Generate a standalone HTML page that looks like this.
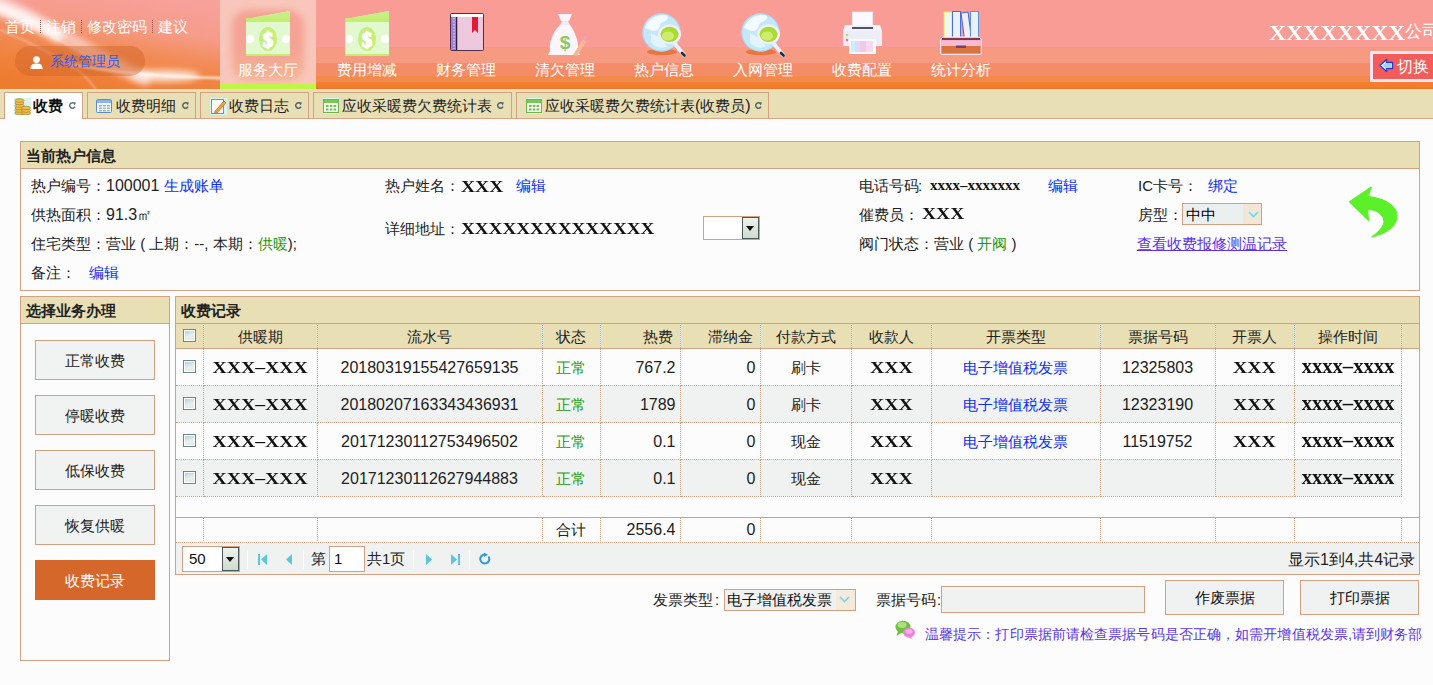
<!DOCTYPE html>
<html><head><meta charset="utf-8">
<style>
*{margin:0;padding:0;box-sizing:border-box}
html,body{width:1433px;height:685px;overflow:hidden;background:#fcfcfc;font-family:"Liberation Sans",sans-serif;font-size:15px;color:#333}
.abs{position:absolute}
#hdr{position:absolute;left:0;top:0;width:1433px;height:90px;
 background:linear-gradient(to bottom,#f99c95 0,#f99c95 47px,#f79a82 47px,#f79a82 63px,#f48c68 63px,#f48c68 76px,#f38a4c 76px,#f38a4c 82px,#f28232 82px,#f07a28 88px,#ee7020 89px,#f8d2ec 89px)}
#swirl{position:absolute;left:0;top:0;width:220px;height:89px;
 background:linear-gradient(160deg,#f6a59a 0%,#f49b82 30%,#f28a50 60%,#ee7d30 100%)}
.toplinks{position:absolute;left:5px;top:18px;color:#fff;font-size:15px;white-space:nowrap}
.toplinks i{display:inline-block;width:0;height:13px;border-left:1px dotted #8a5a50;margin:0 5px;vertical-align:-1px}
.pill{position:absolute;left:15px;top:46px;width:130px;height:30px;border-radius:15px;background:rgba(205,95,35,.42)}
.nav{position:absolute;top:0;width:96px;height:89px;text-align:center;color:#fff;font-size:14px}
.nav .t{position:absolute;left:0;right:0;top:61px}
.nav svg{position:absolute;left:24px;top:8px}
.nav.on{background:#f8c6ba}
.nav.on:before{content:"";position:absolute;left:12px;right:12px;top:10px;bottom:8px;border-radius:16px;background:linear-gradient(to bottom,#f4a294,#f4a494 55%,#f5b494);filter:blur(3px)}
.nav.on:after{content:"";position:absolute;left:0;right:0;top:84px;height:5px;background:#c0f548}
#company{position:absolute;left:1269px;top:21px;color:#fff;font-family:"Liberation Serif",serif;font-weight:bold;font-size:21px;white-space:nowrap}
#switch{position:absolute;left:1370px;top:51px;width:63px;height:31px;background:#f25c5a;border:3px solid #fae4f4;border-right:none;color:#fff;font-size:15px}
#tabbar{position:absolute;left:0;top:90px;width:1433px;height:29px;background:#e8e0b4;border-bottom:1px solid #d6a585}
.tab{position:absolute;top:92px;height:26px;border:1px solid #d2a181;border-bottom:none;background:#e8dfb5}
.tab.on{background:#fff;height:27px}
.panel{position:absolute;border:1px solid #d2a181;background:#fcfcfc}
.ph{white-space:nowrap;overflow:hidden;position:absolute;left:0;right:0;top:0;height:27px;background:#e8dfb5;border-bottom:1px solid #d2a181;font-weight:bold;font-size:15px;color:#222;padding:5px 0 0 5px}
.lbl{position:absolute;white-space:nowrap;font-size:15px;color:#222}
.blue{color:#0a2ef8}
.green{color:#1e9a0c}
.ser{font-family:"Liberation Serif",serif;font-weight:bold;color:#111}
.sx{transform:scaleX(1.22);transform-origin:left}
.btn{white-space:nowrap;overflow:hidden;position:absolute;left:35px;width:120px;height:40px;border:1px solid #d2a181;background:#f1f2f2;text-align:center;line-height:40px;font-size:15px;color:#222}
.btn.on{background:#d6672b;border-color:#d6672b;color:#fff}

#grid td,#foot td{border:1px dotted #d2a181;text-align:center;font-size:15px;color:#222;height:37px;white-space:nowrap;overflow:hidden;padding:2px 4px 0 4px}
#grid tr.hd td{height:25px;border-bottom:1px solid #d2a181;background:#e8dfb5;padding-top:2px}
#grid tr.hd td.r{padding-right:7px}
#grid tr.alt td{background:#f0f2f2}
#grid td:first-child,#foot td:first-child{border-left:none}
#foot td{height:25px;border-top:none}
#grid td.r,#foot td.r{text-align:right}
#grid td.green{color:#1e9a0c}
#grid td.blue{color:#0a2ef8}
#grid td.e,#foot td.e{border-right:none}
#grid td.n{border:none;background:transparent!important}
#grid td.x{font-family:"Liberation Serif",serif;font-weight:bold;font-size:17px;color:#111}
#grid td.x span{display:inline-block;transform:scaleX(1.16)}
#grid td.d,#foot td.d{font-size:16px}
#grid td.x2{font-family:"Liberation Serif",serif;font-weight:bold;font-size:20px;color:#111}
#grid td.x2 span{display:inline-block;transform:scaleX(1.03);position:relative;top:-2px}
.cb{display:inline-block;width:13px;height:13px;border:1.5px solid #6f858c;box-shadow:inset 0 0 0 1px #fff;background:linear-gradient(160deg,#a8cce0,#e8f0ee 55%,#d8eed8);vertical-align:middle;position:relative;top:-3px}
.sep{top:550px;width:1px;height:19px;background:#d8dcdc;border-right:1px solid #fff}
.btn2{white-space:nowrap;overflow:hidden;border:1px solid #d2a181;background:#f0f2f2;text-align:center;line-height:33px;font-size:15px;color:#111}
.navt{color:#fff;font-size:15px}
.dg{font-size:16px}
</style></head><body>
<div id="hdr"></div>
<svg id="swirl" width="220" height="89" viewBox="0 0 220 89" style="position:absolute;left:0;top:0">
<defs>
<linearGradient id="sg" x1="0.75" y1="0" x2="0.35" y2="1"><stop offset="0" stop-color="#f8a09a"/><stop offset="0.3" stop-color="#f69c8a"/><stop offset="0.55" stop-color="#f28c58"/><stop offset="0.75" stop-color="#f08440"/><stop offset="1" stop-color="#ee7c30"/></linearGradient>
<filter id="bl" x="-30%" y="-80%" width="160%" height="260%"><feGaussianBlur stdDeviation="3"/></filter>
<filter id="bl2" x="-20%" y="-50%" width="140%" height="200%"><feGaussianBlur stdDeviation="0.8"/></filter>
</defs>
<rect width="220" height="89" fill="url(#sg)"/>
<path d="M-10 -2 C15 8 45 25 85 48 C105 60 125 72 150 80" stroke="#fde8f0" stroke-width="14" fill="none" opacity=".6" filter="url(#bl)"/>
<path d="M-8 6 C15 14 38 24 62 38" stroke="#fff" stroke-width="12" fill="none" opacity=".85" filter="url(#bl)"/>
<path d="M0 30 C30 42 60 58 80 72 C88 78 92 84 96 90" stroke="#f8c8c0" stroke-width="1.5" fill="none" opacity=".7" filter="url(#bl2)"/>
<path d="M20 22 C50 34 80 50 105 68" stroke="#fff0f4" stroke-width="1.2" fill="none" opacity=".6" filter="url(#bl2)"/>
<ellipse cx="165" cy="76" rx="35" ry="6" fill="#fff" opacity=".75" filter="url(#bl)"/>
<path d="M70 64 C110 72 160 77 222 78" stroke="#fff" stroke-width="1.8" fill="none" opacity=".9" filter="url(#bl2)"/>
</svg>
<div class="toplinks">首页<i></i>注销<i></i>修改密码<i></i>建议</div>
<div class="pill"></div>
<div class="lbl" style="left:50px;top:53px;color:#2a5af8;font-size:14px">系统管理员</div>
<svg class="abs" style="left:30px;top:56px" width="13" height="13" viewBox="0 0 13 13"><circle cx="6.5" cy="3.6" r="3.4" fill="#fff"/><path d="M0.5 13 C0.5 8.5 3 7.5 6.5 7.5 C10 7.5 12.5 8.5 12.5 13Z" fill="#fff"/></svg>

<div class="nav on" style="left:220px;width:96px"></div>
<div class="lbl navt" style="left:268.0px;top:61px;width:90px;margin-left:-45px;text-align:center">服务大厅</div>
<div class="lbl navt" style="left:367.0px;top:61px;width:90px;margin-left:-45px;text-align:center">费用增减</div>
<div class="lbl navt" style="left:465.9px;top:61px;width:90px;margin-left:-45px;text-align:center">财务管理</div>
<div class="lbl navt" style="left:564.9px;top:61px;width:90px;margin-left:-45px;text-align:center">清欠管理</div>
<div class="lbl navt" style="left:663.9px;top:61px;width:90px;margin-left:-45px;text-align:center">热户信息</div>
<div class="lbl navt" style="left:762.9px;top:61px;width:90px;margin-left:-45px;text-align:center">入网管理</div>
<div class="lbl navt" style="left:861.8px;top:61px;width:90px;margin-left:-45px;text-align:center">收费配置</div>
<div class="lbl navt" style="left:960.8px;top:61px;width:90px;margin-left:-45px;text-align:center">统计分析</div>
<svg class="abs" style="left:245px;top:10px" width="47" height="47" viewBox="0 0 47 47">
<path d="M1 9 L45 1 L45 46 L1 46Z" fill="#d6f5a8"/>
<path d="M1 9 L45 1 L45 8 L1 8Z" fill="#c8ee88"/>
<rect x="1" y="8" width="44" height="4" fill="#c4ee70"/>
<rect x="1" y="12" width="44" height="33" fill="#e2f9cf"/>
<rect x="1" y="44" width="44" height="2" fill="#c4ee70"/>
<ellipse cx="23" cy="29" rx="9" ry="12" fill="#c6ee78"/>
<text x="23" y="36.5" text-anchor="middle" font-family="Liberation Serif" font-weight="bold" font-size="21" fill="#ffffff" stroke="#ffffff" stroke-width="1.3">$</text>
<circle cx="5" cy="29" r="4" fill="#fff"/><circle cx="41" cy="29" r="4" fill="#fff"/>
</svg><svg class="abs" style="left:344px;top:10px" width="47" height="47" viewBox="0 0 47 47">
<path d="M1 9 L45 1 L45 46 L1 46Z" fill="#d6f5a8"/>
<path d="M1 9 L45 1 L45 8 L1 8Z" fill="#c8ee88"/>
<rect x="1" y="8" width="44" height="4" fill="#c4ee70"/>
<rect x="1" y="12" width="44" height="33" fill="#e2f9cf"/>
<rect x="1" y="44" width="44" height="2" fill="#c4ee70"/>
<ellipse cx="23" cy="29" rx="9" ry="12" fill="#c6ee78"/>
<text x="23" y="36.5" text-anchor="middle" font-family="Liberation Serif" font-weight="bold" font-size="21" fill="#ffffff" stroke="#ffffff" stroke-width="1.3">$</text>
<circle cx="5" cy="29" r="4" fill="#fff"/><circle cx="41" cy="29" r="4" fill="#fff"/>
</svg><svg class="abs" style="left:450px;top:13px" width="34" height="38" viewBox="0 0 34 38">
<rect x="0.5" y="0.5" width="33" height="37" rx="1" fill="#ecc0d8" stroke="#503050" stroke-width="1"/>
<rect x="1" y="1" width="32" height="3" fill="#fff"/>
<rect x="1" y="4" width="5" height="33" fill="#a080d0"/>
<rect x="6" y="4" width="1.5" height="33" fill="#302040"/>
<line x1="4" y1="5" x2="4" y2="36" stroke="#fff" stroke-width="0.8" stroke-dasharray="1.5,1.5"/>
<rect x="7.5" y="4" width="25" height="33" fill="#eec8dc"/>

<path d="M22 4 L28 4 L28 20 L25 17 L22 20Z" fill="#e01a38"/>
</svg><svg class="abs" style="left:548px;top:13px" width="38" height="44" viewBox="0 0 38 44">
<path d="M10 1 L24 1 L21 8 L13 8Z" fill="#fbf4fb"/>
<path d="M14 8 L20 8 L22 12 L12 12Z" fill="#f2e8f2"/>
<path d="M12 12 C4 20 1 30 2 38 L0 42 L32 42 L30 38 C31 30 28 20 22 12Z" fill="#fbf6fb"/>
<text x="17" y="36" text-anchor="middle" font-family="Liberation Sans" font-weight="bold" font-size="19" fill="#86c870">$</text>
<path d="M25 42 L35 26 L38.5 28.5 L29 43Z" fill="#f6b890"/>
<path d="M35 26 L36.5 23 L39.5 25 L38.5 28.5Z" fill="#f0a0d8"/>
</svg><svg class="abs" style="left:641px;top:12px" width="46" height="45" viewBox="0 0 46 45">
<ellipse cx="21" cy="40" rx="15" ry="3.2" fill="#e26a2a" opacity=".75"/>
<circle cx="20.5" cy="20.5" r="19" fill="#c4e8f8"/>
<circle cx="20.5" cy="20.5" r="18.6" fill="none" stroke="#a8d8f4" stroke-width="1"/>
<path d="M4 16 C8 7 16 2 24 3 C30 4 26 9 22 10 C18 11 20 15 16 18 C12 21 8 17 4 16Z" fill="#f4fcff" opacity=".95"/>
<path d="M10 22 C16 22 20 28 26 34 C22 37 14 36 10 30Z" fill="#eaf8ff" opacity=".8"/>
<path d="M34 32 L43 43" stroke="#eeeeff" stroke-width="4" stroke-linecap="round"/>
<path d="M41 41 L43.5 43.5" stroke="#203040" stroke-width="2.6" stroke-linecap="round"/>
<ellipse cx="28.5" cy="22.3" rx="11.5" ry="10" fill="#f2eefc"/>
<ellipse cx="28.5" cy="22.3" rx="9" ry="7.6" fill="#a8dc30"/>
<ellipse cx="27" cy="24" rx="6" ry="4.5" fill="#d8f080" opacity=".8"/>
</svg><svg class="abs" style="left:740px;top:12px" width="46" height="45" viewBox="0 0 46 45">
<ellipse cx="21" cy="40" rx="15" ry="3.2" fill="#e26a2a" opacity=".75"/>
<circle cx="20.5" cy="20.5" r="19" fill="#c4e8f8"/>
<circle cx="20.5" cy="20.5" r="18.6" fill="none" stroke="#a8d8f4" stroke-width="1"/>
<path d="M4 16 C8 7 16 2 24 3 C30 4 26 9 22 10 C18 11 20 15 16 18 C12 21 8 17 4 16Z" fill="#f4fcff" opacity=".95"/>
<path d="M10 22 C16 22 20 28 26 34 C22 37 14 36 10 30Z" fill="#eaf8ff" opacity=".8"/>
<path d="M34 32 L43 43" stroke="#eeeeff" stroke-width="4" stroke-linecap="round"/>
<path d="M41 41 L43.5 43.5" stroke="#203040" stroke-width="2.6" stroke-linecap="round"/>
<ellipse cx="28.5" cy="22.3" rx="11.5" ry="10" fill="#f2eefc"/>
<ellipse cx="28.5" cy="22.3" rx="9" ry="7.6" fill="#a8dc30"/>
<ellipse cx="27" cy="24" rx="6" ry="4.5" fill="#d8f080" opacity=".8"/>
</svg><svg class="abs" style="left:842px;top:11px" width="41" height="44" viewBox="0 0 41 44">
<rect x="10" y="0.5" width="21" height="17" fill="#fafafe" stroke="#c0c0e0" stroke-width="0.8"/>
<path d="M3 14 L38 14 L40 20 L40 35 L1 35 L1 20Z" fill="#f2f2fa"/>
<rect x="1" y="20" width="39" height="15" fill="#ecedf6"/>
<rect x="10" y="16" width="21" height="2" fill="#505070"/>
<circle cx="5" cy="24" r="1.2" fill="#a0e070"/><circle cx="5" cy="29" r="1.2" fill="#ff6080"/>
<rect x="7" y="28" width="27" height="15" fill="#f8f8ff"/>
<rect x="9" y="30" width="4" height="11" fill="#c8f0f8"/><rect x="13" y="30" width="5" height="11" fill="#e0d8f8"/><rect x="18" y="30" width="6" height="11" fill="#f0c8e8"/><rect x="24" y="30" width="7" height="11" fill="#f8d8f0"/>
</svg><svg class="abs" style="left:939px;top:11px" width="44" height="44" viewBox="0 0 44 44">
<rect x="5" y="1" width="8" height="31" fill="#f2f6ee" stroke="#d8f040" stroke-width="1"/>
<rect x="13.5" y="0.5" width="8" height="32" fill="#eaf2fc" stroke="#4a70e0" stroke-width="1"/>
<path d="M22 2 L29 1 L33 31 L26 32Z" fill="#f0eefc" stroke="#5060d0" stroke-width="1"/>
<rect x="31.5" y="0.5" width="8" height="32" fill="#e6f2fc" stroke="#6090e0" stroke-width="1"/>
<circle cx="9" cy="28" r="1.3" fill="#a0a0b0"/><circle cx="17.5" cy="28" r="1.3" fill="#a0a0c0"/><circle cx="28" cy="28" r="1.3" fill="#9090b0"/><circle cx="35.5" cy="28" r="1.3" fill="#a0a0c0"/>
<path d="M1.5 28 L4 26 L40 26 L42.5 28 L42.5 42 Q42.5 43.5 41 43.5 L3 43.5 Q1.5 43.5 1.5 42Z" fill="#f4b0c8" stroke="#f8e0f0" stroke-width="1"/>
<rect x="3" y="27" width="38" height="2" fill="#803848"/>
<rect x="2.5" y="30" width="39" height="5" fill="#f4bcd4"/>
<rect x="2.5" y="35" width="39" height="7.5" fill="#d8743c"/>
<rect x="17" y="34.5" width="10" height="2.5" fill="#704070"/>
</svg>
<div id="company"><span style="display:inline-block;transform:scaleX(1.124);transform-origin:left;margin-right:15px">XXXXXXXX</span><span style="font-family:'Liberation Sans',sans-serif;font-weight:normal;font-size:17px;position:relative;top:-3px">公司</span></div>
<div id="switch"></div>
<svg class="abs" style="left:1379px;top:58px" width="15" height="15" viewBox="0 0 15 15"><path d="M1 7.5 L7.5 1.5 L7.5 4.5 L13.5 4.5 L13.5 10.5 L7.5 10.5 L7.5 13.5Z" fill="#e8f4ff" stroke="#2a3ad0" stroke-width="1.3" stroke-linejoin="round"/><path d="M3.5 7.5 L7 4.5 L7 6 L12 6 L12 9 L7 9 L7 10.5Z" fill="#9cd0ff"/></svg>
<div class="lbl" style="left:1397px;top:57px;color:#fff;font-size:16px">切换</div>

<div id="tabbar"></div>
<div class="tab on" style="left:4px;width:79px"></div>
<div class="tab" style="left:87px;width:109px"></div>
<div class="tab" style="left:200px;width:109px"></div>
<div class="tab" style="left:313px;width:199px"></div>
<div class="tab" style="left:516px;width:253px"></div>
<svg class="abs" style="left:14px;top:98px" width="17" height="17" viewBox="0 0 17 17"><rect x="0" y="0" width="17" height="17" fill="#d8f4ec"/><g fill="#e8c050" stroke="#b08020" stroke-width="0.7"><ellipse cx="5.5" cy="15" rx="4.5" ry="1.8"/><ellipse cx="5.5" cy="12.5" rx="4.5" ry="1.8"/><ellipse cx="5.5" cy="10" rx="4.5" ry="1.8"/><ellipse cx="5.5" cy="7.5" rx="4.5" ry="1.8"/><ellipse cx="5.5" cy="5" rx="4.5" ry="1.8"/><ellipse cx="5.5" cy="2.5" rx="4.5" ry="1.8"/><ellipse cx="12" cy="15" rx="4.5" ry="1.8"/><ellipse cx="12" cy="12.5" rx="4.5" ry="1.8"/><ellipse cx="12" cy="10" rx="4.5" ry="1.8"/></g></svg>
<svg class="abs" style="left:96px;top:99px" width="16" height="14" viewBox="0 0 16 14"><rect x="0.5" y="0.5" width="15" height="13" rx="1" fill="#f4f8fc" stroke="#5a8ad8"/><rect x="1" y="1" width="14" height="3" fill="#8ab4ec"/><g fill="#9ab0c0"><rect x="3" y="6" width="3" height="1.4"/><rect x="7" y="6" width="3" height="1.4"/><rect x="11" y="6" width="3" height="1.4"/><rect x="3" y="8.5" width="3" height="1.4"/><rect x="7" y="8.5" width="3" height="1.4" fill="#8cd08c"/><rect x="11" y="8.5" width="3" height="1.4"/><rect x="3" y="11" width="3" height="1.4"/><rect x="7" y="11" width="3" height="1.4"/><rect x="11" y="11" width="3" height="1.4"/></g></svg>
<svg class="abs" style="left:210px;top:98px" width="17" height="17" viewBox="0 0 17 17"><rect x="0" y="0" width="17" height="17" fill="#d8f4ec"/><rect x="1.5" y="1.5" width="12" height="14" fill="#fbfbf6" stroke="#8a9098"/><path d="M5 13 L14 3 L16 5 L7 15 L4.5 15.5Z" fill="#f0a040" stroke="#a06020" stroke-width="0.6"/></svg>
<svg class="abs" style="left:323px;top:98px" width="16" height="16" viewBox="0 0 16 16"><rect x="0" y="0" width="16" height="16" fill="#d8f4ec"/><rect x="0.5" y="1.5" width="15" height="13" fill="#f2f8e8" stroke="#6cb84a"/><rect x="1" y="2" width="14" height="3" fill="#78c858"/><g fill="#7ab860"><rect x="3" y="7" width="2.5" height="2"/><rect x="6.8" y="7" width="2.5" height="2"/><rect x="10.6" y="7" width="2.5" height="2"/><rect x="3" y="10.5" width="2.5" height="2"/><rect x="6.8" y="10.5" width="2.5" height="2"/><rect x="10.6" y="10.5" width="2.5" height="2"/></g></svg>
<svg class="abs" style="left:526px;top:98px" width="16" height="16" viewBox="0 0 16 16"><rect x="0" y="0" width="16" height="16" fill="#d8f4ec"/><rect x="0.5" y="1.5" width="15" height="13" fill="#f2f8e8" stroke="#6cb84a"/><rect x="1" y="2" width="14" height="3" fill="#78c858"/><g fill="#7ab860"><rect x="3" y="7" width="2.5" height="2"/><rect x="6.8" y="7" width="2.5" height="2"/><rect x="10.6" y="7" width="2.5" height="2"/><rect x="3" y="10.5" width="2.5" height="2"/><rect x="6.8" y="10.5" width="2.5" height="2"/><rect x="10.6" y="10.5" width="2.5" height="2"/></g></svg>
<div class="lbl" style="left:33px;top:97px;font-weight:bold;color:#111">收费</div>
<div class="lbl" style="left:116px;top:97px;color:#222">收费明细</div>
<div class="lbl" style="left:229px;top:97px;color:#222">收费日志</div>
<div class="lbl" style="left:342px;top:97px;color:#222">应收采暖费欠费统计表</div>
<div class="lbl" style="left:545px;top:97px;color:#222">应收采暖费欠费统计表<span style="font-size:16px">(</span>收费员<span style="font-size:16px">)</span></div>
<svg class="abs" style="left:69px;top:102px" width="7" height="7" viewBox="0 0 7 7"><path d="M5.9 4.6 A2.7 2.7 0 1 1 4.8 1.2" fill="none" stroke="#667777" stroke-width="1.5"/><path d="M3.6 0 L7 0.4 L5.6 3.4Z" fill="#667777"/></svg>
<svg class="abs" style="left:182px;top:102px" width="7" height="7" viewBox="0 0 7 7"><path d="M5.9 4.6 A2.7 2.7 0 1 1 4.8 1.2" fill="none" stroke="#556666" stroke-width="1.5"/><path d="M3.6 0 L7 0.4 L5.6 3.4Z" fill="#556666"/></svg>
<svg class="abs" style="left:295px;top:102px" width="7" height="7" viewBox="0 0 7 7"><path d="M5.9 4.6 A2.7 2.7 0 1 1 4.8 1.2" fill="none" stroke="#556666" stroke-width="1.5"/><path d="M3.6 0 L7 0.4 L5.6 3.4Z" fill="#556666"/></svg>
<svg class="abs" style="left:497px;top:102px" width="7" height="7" viewBox="0 0 7 7"><path d="M5.9 4.6 A2.7 2.7 0 1 1 4.8 1.2" fill="none" stroke="#556666" stroke-width="1.5"/><path d="M3.6 0 L7 0.4 L5.6 3.4Z" fill="#556666"/></svg>
<svg class="abs" style="left:755px;top:102px" width="7" height="7" viewBox="0 0 7 7"><path d="M5.9 4.6 A2.7 2.7 0 1 1 4.8 1.2" fill="none" stroke="#556666" stroke-width="1.5"/><path d="M3.6 0 L7 0.4 L5.6 3.4Z" fill="#556666"/></svg>

<!-- info panel -->
<div class="panel" style="left:20px;top:141px;width:1400px;height:150px"><div class="ph">当前热户信息</div></div>
<div class="lbl" style="left:31px;top:177px">热户编号：<span class="dg">100001</span> <span class="blue">生成账单</span></div>
<div class="lbl" style="left:31px;top:206px">供热面积：<span class="dg">91.3</span>㎡</div>
<div class="lbl" style="left:31px;top:235px">住宅类型：营业 ( 上期：--, 本期：<span class="green">供暖</span>);</div>
<div class="lbl" style="left:31px;top:264px">备注： &nbsp; <span class="blue">编辑</span></div>

<div class="lbl" style="left:385px;top:177px">热户姓名：</div>
<div class="lbl ser sx" style="left:461px;top:178px;font-size:16px">XXX</div>
<div class="lbl blue" style="left:516px;top:177px">编辑</div>
<div class="lbl" style="left:385px;top:220px">详细地址：</div>
<div class="lbl ser sx" style="left:461px;top:220px;font-size:16px;transform:scaleX(1.195)">XXXXXXXXXXXXXX</div>
<div class="abs" style="left:703px;top:216px;width:57px;height:24px;border:1px solid #d2a181;background:#fff"></div>
<div class="abs" style="left:742px;top:217px;width:17px;height:22px;border:1px solid #4a5a58;background:linear-gradient(#eef2ee,#cfdccf)"></div>
<div class="abs" style="left:746px;top:226px;width:0;height:0;border-left:4px solid transparent;border-right:4px solid transparent;border-top:5px solid #111"></div>

<div class="lbl" style="left:859px;top:177px">电话号码<span style="margin-left:-1px">:</span></div>
<div class="lbl ser" style="left:930px;top:177px;font-size:15px">xxxx–xxxxxxx</div>
<div class="lbl blue" style="left:1048px;top:177px">编辑</div>
<div class="lbl" style="left:859px;top:206px">催费员：</div>
<div class="lbl ser sx" style="left:922px;top:205px;font-size:16px">XXX</div>
<div class="lbl" style="left:859px;top:235px">阀门状态：营业 ( <span class="green">开阀</span> )</div>
<div class="lbl" style="left:1138px;top:177px">IC卡号：</div>
<div class="lbl blue" style="left:1208px;top:177px">绑定</div>
<div class="lbl" style="left:1138px;top:206px">房型：</div>
<div class="abs" style="left:1182px;top:203px;width:80px;height:22px;border:1px solid #d2a181;background:#f3e6d6"></div>
<div class="abs" style="left:1183px;top:204px;width:60px;height:20px;background:#eceff0"></div>
<div class="lbl" style="left:1186px;top:206px;color:#000">中中</div>
<svg class="abs" style="left:1248px;top:211px" width="11" height="7" viewBox="0 0 11 7"><path d="M1 1 L5.5 5.5 L10 1" fill="none" stroke="#5ee0f0" stroke-width="1.6"/></svg>
<div class="lbl" style="left:1137px;top:235px;color:#5a30ee;text-decoration:underline">查看收费报修测温记录</div>
<svg class="abs" style="left:1346px;top:185px" width="54" height="54" viewBox="0 0 54 54"><path d="M3.5 16.8 L25.3 2.1 L22 11.6 C38 13 51 21 51 31 C51 41 40 49 25.8 52 C36 45 40 38 37 32 C34 27 28 24.4 21.5 24.4 L22.5 35.3 Z" fill="#5cf02a" stroke="#5cf02a" stroke-width="1.2" stroke-linejoin="round"/></svg>

<!-- left panel -->
<div class="panel" style="left:20px;top:296px;width:150px;height:365px"><div class="ph">选择业务办理</div></div>
<div class="btn" style="top:340px">正常收费</div>
<div class="btn" style="top:395px">停暖收费</div>
<div class="btn" style="top:450px">低保收费</div>
<div class="btn" style="top:505px">恢复供暖</div>
<div class="btn on" style="top:560px">收费记录</div>

<!-- records panel -->
<div class="panel" style="left:175px;top:296px;width:1245px;height:279px"><div class="ph">收费记录</div></div>

<!-- table -->
<table id="grid" style="position:absolute;left:176px;top:323px;border-collapse:collapse;table-layout:fixed;width:1243px">
<colgroup><col style="width:27px"><col style="width:114px"><col style="width:225px"><col style="width:58px"><col style="width:80px"><col style="width:80px"><col style="width:91px"><col style="width:80px"><col style="width:169px"><col style="width:115px"><col style="width:79px"><col style="width:107px"><col style="width:18px"></colgroup>
<tr class="hd"><td><b class="cb"></b></td><td>供暖期</td><td>流水号</td><td>状态</td><td class="r">热费</td><td class="r">滞纳金</td><td>付款方式</td><td>收款人</td><td>开票类型</td><td>票据号码</td><td>开票人</td><td>操作时间</td><td class="e"></td></tr>
<tr><td><b class="cb"></b></td><td class="x"><span>XXX–XXX</span></td><td class="d">20180319155427659135</td><td class="green">正常</td><td class="r d">767.2</td><td class="r d">0</td><td>刷卡</td><td class="x"><span>XXX</span></td><td class="blue">电子增值税发票</td><td class="d">12325803</td><td class="x"><span>XXX</span></td><td class="x2"><span>xxxx–xxxx</span></td><td class="n"></td></tr>
<tr class="alt"><td><b class="cb"></b></td><td class="x"><span>XXX–XXX</span></td><td class="d">20180207163343436931</td><td class="green">正常</td><td class="r d">1789</td><td class="r d">0</td><td>刷卡</td><td class="x"><span>XXX</span></td><td class="blue">电子增值税发票</td><td class="d">12323190</td><td class="x"><span>XXX</span></td><td class="x2"><span>xxxx–xxxx</span></td><td class="n"></td></tr>
<tr><td><b class="cb"></b></td><td class="x"><span>XXX–XXX</span></td><td class="d">20171230112753496502</td><td class="green">正常</td><td class="r d">0.1</td><td class="r d">0</td><td>现金</td><td class="x"><span>XXX</span></td><td class="blue">电子增值税发票</td><td class="d">11519752</td><td class="x"><span>XXX</span></td><td class="x2"><span>xxxx–xxxx</span></td><td class="n"></td></tr>
<tr class="alt"><td><b class="cb"></b></td><td class="x"><span>XXX–XXX</span></td><td class="d">20171230112627944883</td><td class="green">正常</td><td class="r d">0.1</td><td class="r d">0</td><td>现金</td><td class="x"><span>XXX</span></td><td></td><td></td><td></td><td class="x2"><span>xxxx–xxxx</span></td><td class="n"></td></tr>
</table>
<div class="abs" style="left:176px;top:517px;width:1243px;height:1px;background:#d2a181"></div>
<table id="foot" style="position:absolute;left:176px;top:517px;border-collapse:collapse;table-layout:fixed;width:1243px">
<colgroup><col style="width:27px"><col style="width:114px"><col style="width:225px"><col style="width:58px"><col style="width:80px"><col style="width:80px"><col style="width:91px"><col style="width:80px"><col style="width:169px"><col style="width:115px"><col style="width:79px"><col style="width:107px"><col style="width:18px"></colgroup>
<tr><td></td><td></td><td></td><td>合计</td><td class="r d">2556.4</td><td class="r d">0</td><td></td><td></td><td></td><td></td><td></td><td></td><td class="e"></td></tr>
</table>
<div id="pager" class="abs" style="left:176px;top:542px;width:1243px;height:32px;background:#f0f2f2;border-top:1px dotted #d2a181"></div>
<div class="abs" style="left:182px;top:546px;width:58px;height:26px;border:1px solid #d2a181;background:#fff"></div>
<div class="abs" style="left:222px;top:547px;width:17px;height:24px;border:1px solid #4a5a58;background:linear-gradient(#eef2ee,#cfdccf)"></div>
<div class="abs" style="left:226px;top:557px;width:0;height:0;border-left:4px solid transparent;border-right:4px solid transparent;border-top:5px solid #111"></div>
<div class="lbl" style="left:189px;top:550px;font-size:15px;color:#111">50</div>
<div class="abs sep" style="left:247px"></div>
<div class="abs sep" style="left:303px"></div>
<div class="abs sep" style="left:413px"></div>
<div class="abs sep" style="left:469px"></div>
<svg class="abs" style="left:258px;top:554px" width="10" height="11" viewBox="0 0 10 11"><rect x="0" y="0" width="2" height="11" fill="#5bc6e0"/><path d="M9 0 L3 5.5 L9 11Z" fill="#5bc6e0"/></svg>
<svg class="abs" style="left:285px;top:554px" width="8" height="11" viewBox="0 0 8 11"><path d="M7 0 L1 5.5 L7 11Z" fill="#5bc6e0"/></svg>
<div class="lbl" style="left:311px;top:550px;color:#222">第</div>
<div class="abs" style="left:329px;top:546px;width:36px;height:26px;border:1px solid #d2a181;background:#fff"></div>
<div class="lbl" style="left:334px;top:550px;color:#111">1</div>
<div class="lbl" style="left:367px;top:550px;color:#222">共1页</div>
<svg class="abs" style="left:425px;top:554px" width="8" height="11" viewBox="0 0 8 11"><path d="M1 0 L7 5.5 L1 11Z" fill="#5bc6e0"/></svg>
<svg class="abs" style="left:450px;top:554px" width="10" height="11" viewBox="0 0 10 11"><path d="M1 0 L7 5.5 L1 11Z" fill="#5bc6e0"/><rect x="8" y="0" width="2" height="11" fill="#5bc6e0"/></svg>
<svg class="abs" style="left:479px;top:553px" width="12" height="12" viewBox="0 0 12 12"><path d="M9.5 3.5 A4.5 4.5 0 1 1 6 1.5" fill="none" stroke="#2e9ad8" stroke-width="2"/><path d="M5 -0.5 L9 1.8 L5 4Z" fill="#2e9ad8"/></svg>
<div class="lbl" style="left:1288px;top:549.5px;color:#222;font-size:15.8px">显示<span class="dg">1</span>到<span class="dg">4,</span>共<span class="dg">4</span>记录</div>

<!-- bottom controls -->
<div class="lbl" style="left:653px;top:591px;color:#222">发票类型<span style="margin-left:2px">:</span></div>
<div class="abs" style="left:724px;top:589px;width:132px;height:22px;border:1px solid #d2a181;background:#f3eadc"></div>
<div class="abs" style="left:725px;top:590px;width:111px;height:20px;background:#f0f2f2"></div>
<div class="lbl" style="left:727px;top:591px;color:#111">电子增值税发票</div>
<svg class="abs" style="left:839px;top:596px" width="11" height="7" viewBox="0 0 11 7"><path d="M1 1 L5.5 5.5 L10 1" fill="none" stroke="#6ad4e8" stroke-width="1.5"/></svg>
<div class="lbl" style="left:876px;top:591px;color:#222">票据号码<span style="margin-left:1px">:</span></div>
<div class="abs" style="left:941px;top:586px;width:204px;height:27px;border:1px solid #d2a181;background:#f0f2f2"></div>
<div class="abs btn2" style="left:1165px;top:580px;width:119px;height:35px">作废票据</div>
<div class="abs btn2" style="left:1300px;top:580px;width:119px;height:35px">打印票据</div>
<svg class="abs" style="left:895px;top:620px" width="21" height="20" viewBox="0 0 21 20"><ellipse cx="8" cy="7" rx="7.5" ry="6.2" fill="#70c040"/><ellipse cx="7" cy="5" rx="4.5" ry="3" fill="#b8e890" opacity=".8"/><path d="M3 11 L1.5 16 L7 12.5Z" fill="#70c040"/><ellipse cx="14" cy="12.5" rx="6" ry="4.8" fill="#f080d8"/><ellipse cx="14" cy="11.5" rx="3.5" ry="2.2" fill="#f8c0ec" opacity=".8"/><path d="M15 16 L18 19.5 L12 16.5Z" fill="#f080d8"/></svg>
<div class="lbl" style="left:925px;top:626px;color:#5a34ee;font-size:14px;letter-spacing:0.1px">温馨提示：打印票据前请检查票据号码是否正确，如需开增值税发票,请到财务部</div>

<script>
(function(){
  var t=document.createElement('span');
  t.style.cssText='position:absolute;left:-9999px;top:0;font-size:100px;white-space:nowrap;font-family:"Liberation Sans",sans-serif';
  t.textContent='\u4e2d\u6587\u6d4b\u8bd5\u6536\u8d39\u8bb0\u5f55\u7ba1\u7406';
  document.body.appendChild(t);
  var w=t.getBoundingClientRect().width/10/100;
  document.body.removeChild(t);
  if(w>0.93&&w<1.07) return;
  var st=document.createElement('style');
  st.textContent='.cjk,.cjp{display:inline-block;width:1em;line-height:1.15;text-align:center;-webkit-text-fill-color:transparent;background-repeat:no-repeat}'+
   '.cjk{background-image:repeating-linear-gradient(to bottom,currentColor 0,currentColor 1px,transparent 1px,transparent 3.2px),linear-gradient(currentColor,currentColor),linear-gradient(currentColor,currentColor);background-size:0.84em 0.84em,1px 0.84em,1px 0.84em;background-position:50% 62%,35% 62%,68% 62%}'+
   '.cjp{background-image:linear-gradient(currentColor,currentColor);background-size:2px 2px;background-position:30% 75%}'+
   '.cjb{background-image:repeating-linear-gradient(to bottom,currentColor 0,currentColor 1.35px,transparent 1.35px,transparent 3.2px),linear-gradient(currentColor,currentColor),linear-gradient(currentColor,currentColor);background-size:0.84em 0.84em,1.6px 0.84em,1.6px 0.84em}';
  document.head.appendChild(st);
  var re=/[\u2e80-\u9fff\uf900-\ufaff\uff00-\uffef\u3000-\u303f\u3300-\u33ff]/;
  var walker=document.createTreeWalker(document.body,NodeFilter.SHOW_TEXT,null,false);
  var nodes=[],n;
  while((n=walker.nextNode())){ if(re.test(n.nodeValue)&&n.parentNode&&n.parentNode.nodeName!=='SCRIPT'&&n.parentNode.nodeName!=='STYLE'&&!(n.parentNode instanceof SVGElement)) nodes.push(n); }
  nodes.forEach(function(node){
    var frag=document.createDocumentFragment(), txt=node.nodeValue, buf='';
    for(var i=0;i<txt.length;i++){
      var c=txt[i];
      if(re.test(c)){
        if(buf){frag.appendChild(document.createTextNode(buf));buf='';}
        var sp=document.createElement('span');
        sp.className=/[\uff00-\uffef\u3000-\u303f]/.test(c)?'cjp':'cjk';
        sp.textContent=c; frag.appendChild(sp);
      } else buf+=c;
    }
    if(buf) frag.appendChild(document.createTextNode(buf));
    var bold=parseInt(getComputedStyle(node.parentNode).fontWeight,10)>=600;
    if(bold){ for(var k=0;k<frag.childNodes.length;k++){ var e=frag.childNodes[k]; if(e.className==='cjk') e.className='cjk cjb'; } }
    node.parentNode.replaceChild(frag,node);
  });
})();
</script>
</body></html>
